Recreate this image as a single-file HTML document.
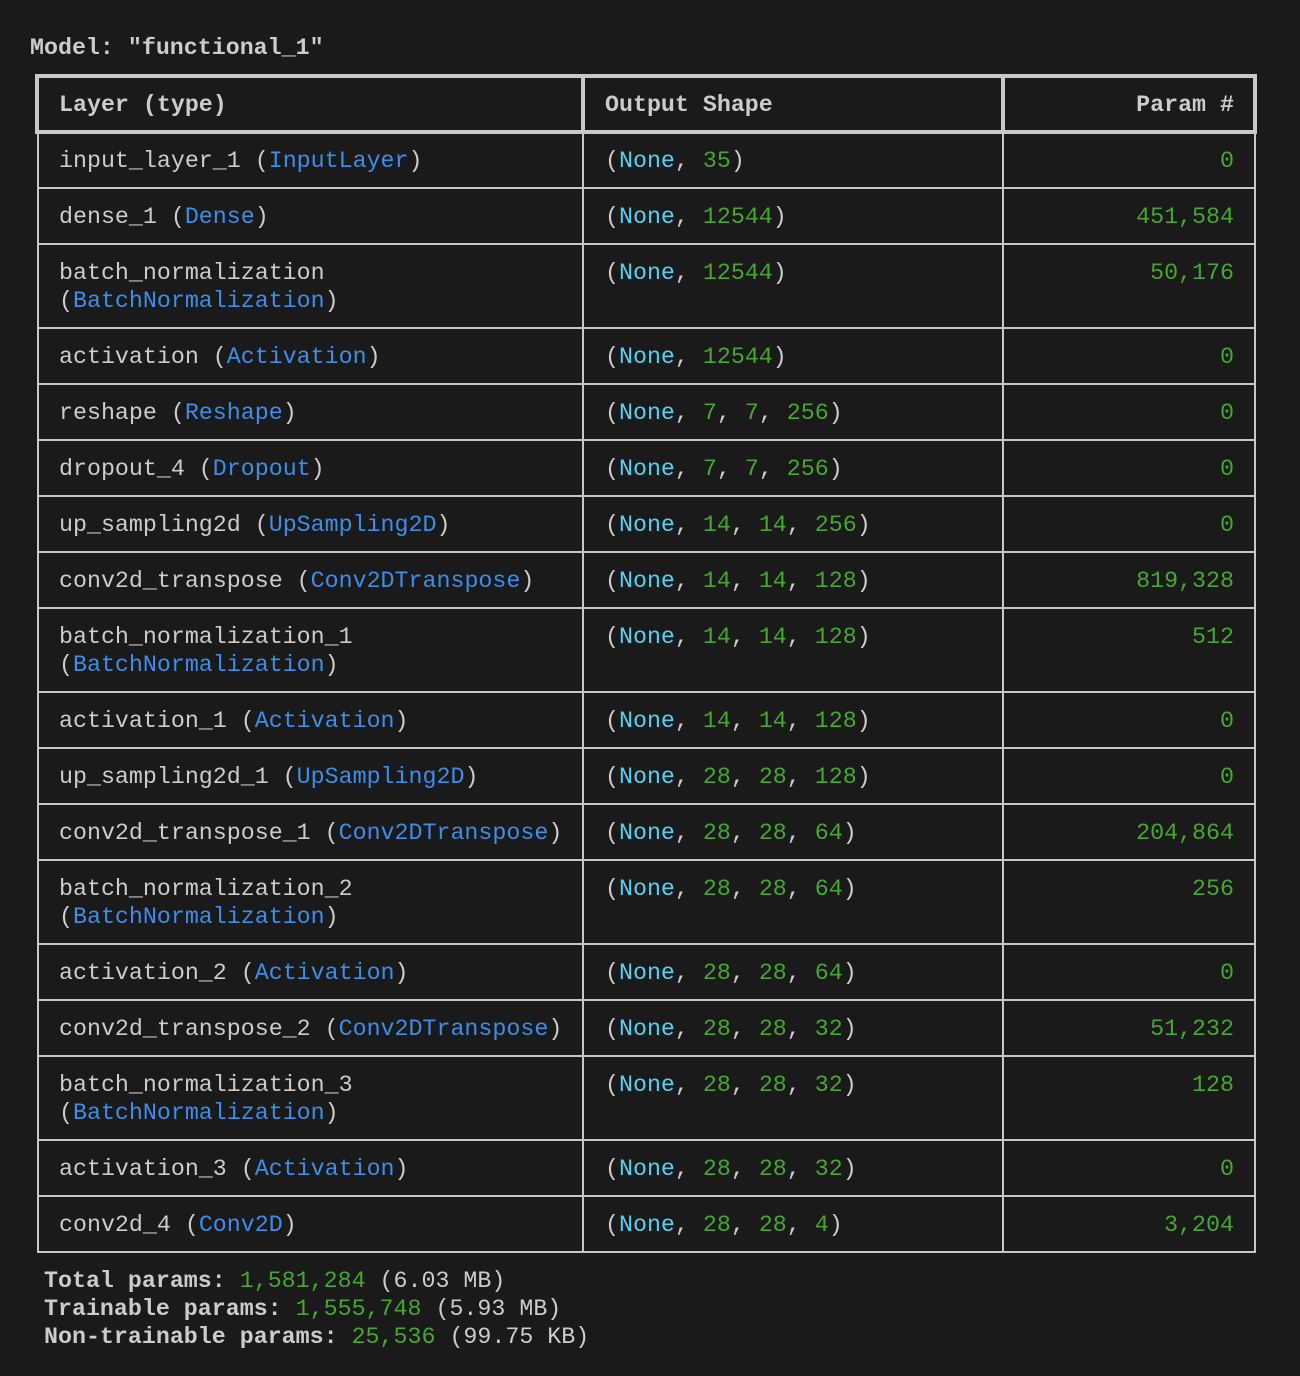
<!DOCTYPE html>
<html><head><meta charset="utf-8"><style>
html,body{margin:0;padding:0;background:#1a1a1a;}
body{width:1300px;height:1376px;position:relative;overflow:hidden;font-family:"Liberation Mono","DejaVu Sans Mono",monospace;font-size:23.3px;color:#cccccc;line-height:28px;}
.t{position:absolute;white-space:pre;}
b{font-weight:bold;}
.b{color:#3b8eea}.c{color:#4fd3f7}.g{color:#45a82f}
.hdr{position:absolute;left:35px;top:74px;width:1214px;height:52px;border:4px solid #c8c8c8;}
.vl{position:absolute;background:#c8c8c8;}
.row{position:absolute;left:37px;width:1219px;}
.row .c1,.row .c2,.row .c3{position:absolute;top:14px;white-space:pre;}
.c1{left:22px}.c2{left:568px}.c3{right:22px;text-align:right}
</style></head><body>
<div class="t" style="left:30px;top:34px;font-weight:bold;">Model: "functional_1"</div>
<div class="hdr"></div>
<div class="vl" style="left:581px;top:74px;width:4px;height:60px"></div>
<div class="vl" style="left:1001px;top:74px;width:4px;height:60px"></div>
<div class="t" style="left:59px;top:91px;font-weight:bold">Layer (type)</div>
<div class="t" style="left:605px;top:91px;font-weight:bold">Output Shape</div>
<div class="t" style="right:66px;top:91px;font-weight:bold">Param #</div>

<div class="vl" style="left:37px;top:134px;width:2px;height:1119px"></div>
<div class="vl" style="left:582px;top:134px;width:2px;height:1119px"></div>
<div class="vl" style="left:1002px;top:134px;width:2px;height:1119px"></div>
<div class="vl" style="left:1254px;top:134px;width:2px;height:1119px"></div>
<div class="vl" style="left:37px;top:187px;width:1219px;height:2px"></div>
<div class="vl" style="left:37px;top:243px;width:1219px;height:2px"></div>
<div class="vl" style="left:37px;top:327px;width:1219px;height:2px"></div>
<div class="vl" style="left:37px;top:383px;width:1219px;height:2px"></div>
<div class="vl" style="left:37px;top:439px;width:1219px;height:2px"></div>
<div class="vl" style="left:37px;top:495px;width:1219px;height:2px"></div>
<div class="vl" style="left:37px;top:551px;width:1219px;height:2px"></div>
<div class="vl" style="left:37px;top:607px;width:1219px;height:2px"></div>
<div class="vl" style="left:37px;top:691px;width:1219px;height:2px"></div>
<div class="vl" style="left:37px;top:747px;width:1219px;height:2px"></div>
<div class="vl" style="left:37px;top:803px;width:1219px;height:2px"></div>
<div class="vl" style="left:37px;top:859px;width:1219px;height:2px"></div>
<div class="vl" style="left:37px;top:943px;width:1219px;height:2px"></div>
<div class="vl" style="left:37px;top:999px;width:1219px;height:2px"></div>
<div class="vl" style="left:37px;top:1055px;width:1219px;height:2px"></div>
<div class="vl" style="left:37px;top:1139px;width:1219px;height:2px"></div>
<div class="vl" style="left:37px;top:1195px;width:1219px;height:2px"></div>
<div class="vl" style="left:37px;top:1251px;width:1219px;height:2px"></div>

<div class="row" style="top:133px"><div class="c1">input_layer_1 (<span class="b">InputLayer</span>)</div><div class="c2">(<span class="c">None</span>, <span class="g">35</span>)</div><div class="c3 g">0</div></div>
<div class="row" style="top:189px"><div class="c1">dense_1 (<span class="b">Dense</span>)</div><div class="c2">(<span class="c">None</span>, <span class="g">12544</span>)</div><div class="c3 g">451,584</div></div>
<div class="row" style="top:245px"><div class="c1">batch_normalization
(<span class="b">BatchNormalization</span>)</div><div class="c2">(<span class="c">None</span>, <span class="g">12544</span>)</div><div class="c3 g">50,176</div></div>
<div class="row" style="top:329px"><div class="c1">activation (<span class="b">Activation</span>)</div><div class="c2">(<span class="c">None</span>, <span class="g">12544</span>)</div><div class="c3 g">0</div></div>
<div class="row" style="top:385px"><div class="c1">reshape (<span class="b">Reshape</span>)</div><div class="c2">(<span class="c">None</span>, <span class="g">7</span>, <span class="g">7</span>, <span class="g">256</span>)</div><div class="c3 g">0</div></div>
<div class="row" style="top:441px"><div class="c1">dropout_4 (<span class="b">Dropout</span>)</div><div class="c2">(<span class="c">None</span>, <span class="g">7</span>, <span class="g">7</span>, <span class="g">256</span>)</div><div class="c3 g">0</div></div>
<div class="row" style="top:497px"><div class="c1">up_sampling2d (<span class="b">UpSampling2D</span>)</div><div class="c2">(<span class="c">None</span>, <span class="g">14</span>, <span class="g">14</span>, <span class="g">256</span>)</div><div class="c3 g">0</div></div>
<div class="row" style="top:553px"><div class="c1">conv2d_transpose (<span class="b">Conv2DTranspose</span>)</div><div class="c2">(<span class="c">None</span>, <span class="g">14</span>, <span class="g">14</span>, <span class="g">128</span>)</div><div class="c3 g">819,328</div></div>
<div class="row" style="top:609px"><div class="c1">batch_normalization_1
(<span class="b">BatchNormalization</span>)</div><div class="c2">(<span class="c">None</span>, <span class="g">14</span>, <span class="g">14</span>, <span class="g">128</span>)</div><div class="c3 g">512</div></div>
<div class="row" style="top:693px"><div class="c1">activation_1 (<span class="b">Activation</span>)</div><div class="c2">(<span class="c">None</span>, <span class="g">14</span>, <span class="g">14</span>, <span class="g">128</span>)</div><div class="c3 g">0</div></div>
<div class="row" style="top:749px"><div class="c1">up_sampling2d_1 (<span class="b">UpSampling2D</span>)</div><div class="c2">(<span class="c">None</span>, <span class="g">28</span>, <span class="g">28</span>, <span class="g">128</span>)</div><div class="c3 g">0</div></div>
<div class="row" style="top:805px"><div class="c1">conv2d_transpose_1 (<span class="b">Conv2DTranspose</span>)</div><div class="c2">(<span class="c">None</span>, <span class="g">28</span>, <span class="g">28</span>, <span class="g">64</span>)</div><div class="c3 g">204,864</div></div>
<div class="row" style="top:861px"><div class="c1">batch_normalization_2
(<span class="b">BatchNormalization</span>)</div><div class="c2">(<span class="c">None</span>, <span class="g">28</span>, <span class="g">28</span>, <span class="g">64</span>)</div><div class="c3 g">256</div></div>
<div class="row" style="top:945px"><div class="c1">activation_2 (<span class="b">Activation</span>)</div><div class="c2">(<span class="c">None</span>, <span class="g">28</span>, <span class="g">28</span>, <span class="g">64</span>)</div><div class="c3 g">0</div></div>
<div class="row" style="top:1001px"><div class="c1">conv2d_transpose_2 (<span class="b">Conv2DTranspose</span>)</div><div class="c2">(<span class="c">None</span>, <span class="g">28</span>, <span class="g">28</span>, <span class="g">32</span>)</div><div class="c3 g">51,232</div></div>
<div class="row" style="top:1057px"><div class="c1">batch_normalization_3
(<span class="b">BatchNormalization</span>)</div><div class="c2">(<span class="c">None</span>, <span class="g">28</span>, <span class="g">28</span>, <span class="g">32</span>)</div><div class="c3 g">128</div></div>
<div class="row" style="top:1141px"><div class="c1">activation_3 (<span class="b">Activation</span>)</div><div class="c2">(<span class="c">None</span>, <span class="g">28</span>, <span class="g">28</span>, <span class="g">32</span>)</div><div class="c3 g">0</div></div>
<div class="row" style="top:1197px"><div class="c1">conv2d_4 (<span class="b">Conv2D</span>)</div><div class="c2">(<span class="c">None</span>, <span class="g">28</span>, <span class="g">28</span>, <span class="g">4</span>)</div><div class="c3 g">3,204</div></div>

<div class="t" style="left:44px;top:1267px"><b>Total params:</b> <span class="g">1,581,284</span> (6.03 MB)
<b>Trainable params:</b> <span class="g">1,555,748</span> (5.93 MB)
<b>Non-trainable params:</b> <span class="g">25,536</span> (99.75 KB)</div>
</body></html>
